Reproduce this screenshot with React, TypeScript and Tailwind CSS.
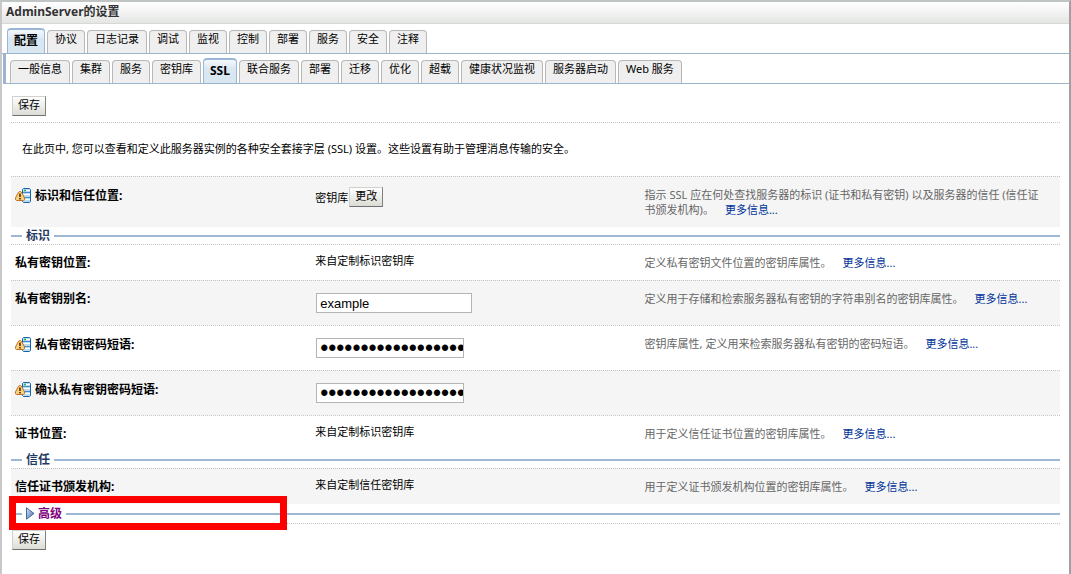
import type { ReactNode } from 'react';

const FONT = "font-['Noto_Sans','Noto_Sans_CJK_SC',sans-serif]";

const mainTabs = ['配置', '协议', '日志记录', '调试', '监视', '控制', '部署', '服务', '安全', '注释'];
const subTabs = [
  '一般信息', '集群', '服务', '密钥库', 'SSL', '联合服务', '部署', '迁移', '优化', '超载',
  '健康状况监视', '服务器启动', 'Web 服务',
];

function Tabs({ items, active, label }: { items: string[]; active: string; label: string }) {
  return (
    <nav aria-label={label} className="flex items-end gap-0.5">
      {items.map((item) =>
        item === active ? (
          <a
            key={item}
            href="#"
            aria-current="page"
            className="h-[25px] rounded-t border border-t-2 border-b-0 border-[#9ab6d6] bg-linear-to-b from-[#f4f8fc] to-[#d9e7f1] to-40% px-1.5 pt-[3px] text-xs leading-4 font-bold whitespace-nowrap text-black"
          >
            {item}
          </a>
        ) : (
          <a
            key={item}
            href="#"
            className="h-[23px] rounded-t border border-b-0 border-[#b8b8b8] bg-[#efefef] px-[7px] text-[11px] leading-4 whitespace-nowrap text-black"
          >
            {item}
          </a>
        ),
      )}
    </nav>
  );
}

function PushButton({ children }: { children: ReactNode }) {
  return (
    <button
      type="button"
      className="h-5 border border-t-[#d0d0cc] border-r-[#808080] border-b-[#707070] border-l-[#d0d0cc] bg-linear-to-b from-white to-[#dcdcd6] px-[5px] pb-[3px] text-[11px] leading-[15px] text-black"
    >
      {children}
    </button>
  );
}

function RestartIcon() {
  return (
    <svg width="16" height="16" viewBox="0 0 16 16" aria-hidden="true" className="shrink-0">
      <path d="M8.500 .5h6l1 1v12l-1 1h-6l-1-1v-12z" fill="#b9dcf5" stroke="#1a62a8" />
      <path d="M8 4.500h7M8 9.500h7" stroke="#3f8cc9" />
      <path d="M11 2.500h4M8 6.500h7M8 11.500h7" stroke="#fff" />
      <path d="M9 2.500h2" stroke="#35b34a" strokeWidth="1.500" />
      <path
        d="M4.300 3.500h1.400l1.300 1.500 2.500 5v1.700l-1 .8h-7l-1-.8v-1.700l2.500-5z"
        fill="#fbd07a"
        stroke="#c07226"
        strokeLinejoin="round"
      />
      <path d="M5 5.500v3.500M5 10v1.500" stroke="#4f3010" strokeWidth="1.600" />
    </svg>
  );
}

interface RowProps {
  label: string;
  htmlFor?: string;
  restart?: boolean;
  shaded?: boolean;
  help?: string;
  kind?: 'text' | 'button' | 'input';
  children: ReactNode;
}

const valuePadding = { text: 'pt-2', button: 'pt-2.5', input: 'py-3 pl-px' };

function Row({ label, htmlFor, restart, shaded, help, kind = 'text', children }: RowProps) {
  return (
    <div
      className={`grid grid-cols-[29%_31.4%_1fr] border-t border-dotted border-[#c4c4c4] ${shaded ? 'bg-[#f5f5f5]' : 'bg-white'}`}
    >
      <div className={`flex items-start gap-1 pb-2 pl-1 ${restart ? 'pt-[11px]' : 'pt-2.5'}`}>
        {restart && <RestartIcon />}
        <label htmlFor={htmlFor} className="text-xs leading-4 font-bold text-black">
          {label}
        </label>
      </div>
      <div className={valuePadding[kind]}>{children}</div>
      <p className="py-2.5 pr-4 text-[#666]">
        {help && (
          <>
            {help}
            <a href="#" className="ml-[11px] inline-block whitespace-nowrap text-[#003399]">
              更多信息...
            </a>
          </>
        )}
      </p>
    </div>
  );
}

function SectionLine({ children }: { children: ReactNode }) {
  return (
    <div className="flex h-[17px] items-center gap-1">
      <span className="h-0.5 w-[11px] bg-[#9db8d6]" />
      {children}
      <span className="h-0.5 flex-1 bg-[#9db8d6]" />
    </div>
  );
}

const inputBase =
  "block h-5 max-w-full border border-[#b4b4b0] bg-white px-[3px] font-['Liberation_Sans',sans-serif] text-black outline-none";

export default function App() {
  return (
    <main
      className={`${FONT} min-h-screen border-t-2 border-r-2 border-l-2 border-t-[#c0c4c4] border-r-[#a0a0a0] border-l-[#c8c8c8] bg-white text-[11px] leading-[15px] text-black`}
    >
      <h1 className="h-[22px] border-b border-[#d8d8d8] bg-linear-to-b from-white to-[#e4e6e4] pl-1 text-xs leading-5 font-bold text-[#333]">
        AdminServer的设置
      </h1>
      <div className="border-b border-[#9bb5cf] pt-1 pl-[5px]">
        <Tabs items={mainTabs} active="配置" label="设置类别" />
      </div>
      <div className="ml-px border-b border-l-[3px] border-[#9bb5cf] pt-1 pl-1">
        <Tabs items={subTabs} active="SSL" label="配置" />
      </div>

      <form className="pr-[9px] pl-[9px]" onSubmit={(e) => e.preventDefault()}>
        <div className="flex pt-3 pb-1.5 pl-px">
          <PushButton>保存</PushButton>
        </div>
        <p className="border-t border-dotted border-[#c4c4c4] px-[11px] pt-[18px] pb-5">
          在此页中, 您可以查看和定义此服务器实例的各种安全套接字层 (SSL) 设置。这些设置有助于管理消息传输的安全。
        </p>

        <Row
          label="标识和信任位置:"
          restart
          shaded
          kind="button"
          help="指示 SSL 应在何处查找服务器的标识 (证书和私有密钥) 以及服务器的信任 (信任证书颁发机构)。"
        >
          <div className="flex items-center gap-px">
            <span>密钥库</span>
            <PushButton>更改</PushButton>
          </div>
        </Row>
        <SectionLine>
          <h2 className="text-xs leading-4 font-bold text-[#1f3a63]">标识</h2>
        </SectionLine>
        <Row label="私有密钥位置:" help="定义私有密钥文件位置的密钥库属性。">
          来自定制标识密钥库
        </Row>
        <Row
          label="私有密钥别名:"
          htmlFor="alias"
          shaded
          kind="input"
          help="定义用于存储和检索服务器私有密钥的字符串别名的密钥库属性。"
        >
          <input
            id="alias"
            type="text"
            defaultValue="example"
            className={`${inputBase} w-[156px] text-[13px]`}
          />
        </Row>
        <Row
          label="私有密钥密码短语:"
          htmlFor="phrase"
          restart
          kind="input"
          help="密钥库属性, 定义用来检索服务器私有密钥的密码短语。"
        >
          <input
            id="phrase"
            type="password"
            defaultValue="123456789012345678"
            className={`${inputBase} w-[148px] pr-0 text-[23px]`}
          />
        </Row>
        <Row label="确认私有密钥密码短语:" htmlFor="confirm" restart shaded kind="input">
          <input
            id="confirm"
            type="password"
            defaultValue="123456789012345678"
            className={`${inputBase} w-[148px] pr-0 text-[23px]`}
          />
        </Row>
        <Row label="证书位置:" help="用于定义信任证书位置的密钥库属性。">
          来自定制标识密钥库
        </Row>
        <SectionLine>
          <h2 className="text-xs leading-4 font-bold text-[#1f3a63]">信任</h2>
        </SectionLine>
        <Row label="信任证书颁发机构:" shaded help="用于定义证书颁发机构位置的密钥库属性。">
          来自定制信任密钥库
        </Row>
        <div className="relative border-b border-dotted border-[#c4c4c4] py-px">
          <SectionLine>
            <button type="button" aria-expanded="false" className="flex items-center gap-[3px] text-xs leading-4 font-bold text-[#800080]">
              <svg width="9" height="13" viewBox="0 0 9 13" aria-hidden="true">
                <defs>
                  <linearGradient id="arrow" x1="0" y1="0" x2="1" y2="1">
                    <stop offset="0" stopColor="#dceaf8" />
                    <stop offset="1" stopColor="#3a66a4" />
                  </linearGradient>
                </defs>
                <path d="M.5 .8v11.400L8 6.500z" fill="url(#arrow)" stroke="#4468a0" strokeLinejoin="round" />
              </svg>
              高级
            </button>
          </SectionLine>
          <span className="pointer-events-none absolute -top-2 -left-0.5 h-[34px] w-[278px] border-[7px] border-[#ff0000]" />
        </div>
        <div className="flex pt-1.5 pb-4 pl-px">
          <PushButton>保存</PushButton>
        </div>
      </form>
    </main>
  );
}
